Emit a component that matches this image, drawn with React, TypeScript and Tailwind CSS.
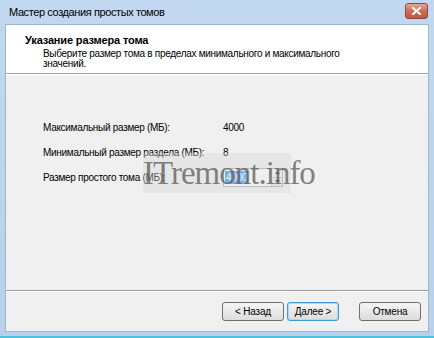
import React from "react";

const font = { fontFamily: '"Liberation Sans", Arial, sans-serif' };

function WinButton({ label, focused }: { label: string; focused?: boolean }) {
  return (
    <button
      type="button"
      className={`h-[19px] rounded-[3px] border bg-gradient-to-b from-[#f6f6f6] to-[#dcdcdc] text-[10px] tracking-[-0.2px] text-black ${
        focused ? "border-[#3c9ad6] shadow-[inset_0_0_0_1px_#a6dcf7]" : "border-[#707070]"
      }`}
    >
      {label}
    </button>
  );
}

export default function App() {
  return (
    <div
      className="relative flex h-[338px] w-[434px] flex-col overflow-hidden border-b-2 border-[#4cc3dd] bg-gradient-to-b from-[#c2d8f0] to-[#b8d0ea]"
      style={font}
    >
      {/* title bar */}
      <div className="flex h-[24px] shrink-0 items-center justify-between pl-[9px] pr-[6px]">
        <span className="text-[11px] tracking-[-0.4px] text-black">Мастер создания простых томов</span>
        <div className="mt-[-2px] flex h-[16px] w-[23px] items-center justify-center rounded-[3px] border border-[#8a4a3e] bg-gradient-to-b from-[#e6a898] via-[#cf6a53] to-[#c4543c]">
          <svg width="9" height="8" viewBox="0 0 9 8">
            <path d="M1 1 L8 7 M8 1 L1 7" stroke="#fff" strokeWidth="2.2" strokeLinecap="square" />
          </svg>
        </div>
      </div>

      {/* client area */}
      <div className="mx-[5px] flex flex-1 flex-col border border-[#9fb6cf] bg-[#f0f0f0]">
        <div className="h-[49px] shrink-0 border-b border-[#a0a0a0] bg-white pl-[19px] pt-[8px]">
          <div className="text-[11px] font-bold leading-[14px] tracking-[-0.15px] text-black">Указание размера тома</div>
          <div className="pl-[18px] text-[10px] leading-[10px] tracking-[-0.3px] text-black">
            <div className="mt-[2px]">Выберите размер тома в пределах минимального и максимального</div>
            <div>значений.</div>
          </div>
        </div>
        <div className="h-px bg-white" />

        <div className="flex flex-1 flex-col gap-[11px] whitespace-nowrap pl-[37px] pt-[45px] text-[10px] tracking-[-0.3px] text-black">
          <div className="flex h-[14px] items-center">
            <span className="w-[180px]">Максимальный размер (МБ):</span>
            <span>4000</span>
          </div>
          <div className="flex h-[14px] items-center">
            <span className="w-[180px]">Минимальный размер раздела (МБ):</span>
            <span>8</span>
          </div>
          <div className="flex h-[14px] items-center">
            <span className="w-[180px]">Размер простого тома (МБ):</span>
            <div className="flex h-[19px] w-[60px] border border-[#abadb3] bg-white">
              <div className="flex flex-1 items-center pl-[1px]">
                <span className="bg-[#3399ff] px-[1px] leading-[13px] text-white">4000</span>
              </div>
              <div className="flex w-[11px] flex-col border-l border-[#c9c9c9]">
                <div className="flex flex-1 items-center justify-center bg-[#f4f4f4]">
                  <svg width="5" height="3" viewBox="0 0 5 3"><path d="M0 3 L2.5 0 L5 3 Z" fill="#333" /></svg>
                </div>
                <div className="flex flex-1 items-center justify-center border-t border-[#c9c9c9] bg-[#e6e6e6]">
                  <svg width="5" height="3" viewBox="0 0 5 3"><path d="M0 0 L2.5 3 L5 0 Z" fill="#333" /></svg>
                </div>
              </div>
            </div>
          </div>
        </div>

        <div className="h-px bg-[#a0a0a0]" />
        <div className="h-px bg-white" />
        <div className="flex h-[39px] shrink-0 items-center pl-[216px]">
          <div className="flex w-[62px] flex-col"><WinButton label="< Назад" /></div>
          <div className="ml-[3px] flex w-[52px] flex-col"><WinButton label="Далее >" focused /></div>
          <div className="ml-[20px] flex w-[62px] flex-col"><WinButton label="Отмена" /></div>
        </div>
      </div>
      <div className="h-[4px] shrink-0" />

      {/* watermark overlay */}
      <div className="absolute left-[143px] top-[153px] flex h-[40px] w-[148px] items-center bg-[#d8d8d8]/40">
        <span
          className="text-[33px] leading-none tracking-[-1px] text-[#5a5a5a]/75"
          style={{ fontFamily: '"Liberation Serif", "Times New Roman", serif' }}
        >
          ITremont.info
        </span>
      </div>
    </div>
  );
}
